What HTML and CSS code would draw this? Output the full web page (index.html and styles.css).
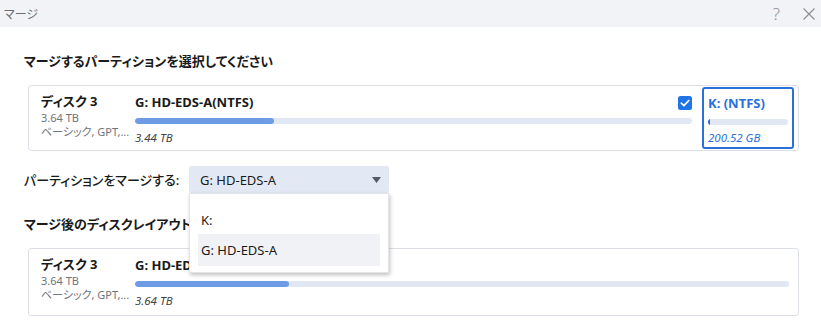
FILE: index.html
```html
<!DOCTYPE html>
<html lang="ja">
<head>
<meta charset="utf-8">
<link rel="stylesheet" href="styles.css">
</head>
<body>
<div class="titlebar">
  <span class="title">マージ</span>
  <div class="tb-icons">
    <span class="help">?</span>
    <svg class="close" width="14" height="14" viewBox="0 0 14 14"><path d="M1.5 1.5L12.5 12.5M12.5 1.5L1.5 12.5" stroke="#8a8d96" stroke-width="1.1" fill="none"/></svg>
  </div>
</div>
<div class="content">
  <h2 class="heading">マージするパーティションを選択してください</h2>
  <div class="card">
    <div class="disk">
      <div class="disk-name">ディスク 3</div>
      <div class="disk-size">3.64 TB</div>
      <div class="disk-type">ベーシック, GPT,...</div>
    </div>
    <div class="part">
      <div class="part-head">
        <span class="part-name">G: HD-EDS-A(NTFS)</span>
        <svg class="check" width="14" height="14" viewBox="0 0 14 14"><rect width="14" height="14" rx="2.5" fill="#1f74e8"/><path d="M3.3 7.2L5.9 9.7L10.8 4.5" stroke="#fff" stroke-width="1.7" fill="none" stroke-linecap="round" stroke-linejoin="round"/></svg>
      </div>
      <div class="bar"><div class="fill" style="width:25%"></div></div>
      <div class="part-size">3.44 TB</div>
    </div>
    <div class="part part-sel">
      <div class="part-head"><span class="part-name">K: (NTFS)</span></div>
      <div class="bar"><div class="fill tick"></div></div>
      <div class="part-size">200.52 GB</div>
    </div>
  </div>
  <div class="merge-row">
    <span class="merge-label">パーティションをマージする:</span>
    <div class="select-wrap">
      <div class="select">
        <span>G: HD-EDS-A</span>
        <svg width="9" height="6" viewBox="0 0 9 6"><path d="M0 0H9L4.5 6Z" fill="#555a63"/></svg>
      </div>
      <div class="menu">
        <div class="opt">K:</div>
        <div class="opt opt-hover">G: HD-EDS-A</div>
      </div>
    </div>
  </div>
  <h2 class="heading heading2">マージ後のディスクレイアウト</h2>
  <div class="card card2">
    <div class="disk">
      <div class="disk-name">ディスク 3</div>
      <div class="disk-size">3.64 TB</div>
      <div class="disk-type">ベーシック, GPT,...</div>
    </div>
    <div class="part">
      <div class="part-head"><span class="part-name">G: HD-EDS-A(NTFS)</span></div>
      <div class="bar"><div class="fill" style="width:23.6%"></div></div>
      <div class="part-size">3.64 TB</div>
    </div>
  </div>
</div>
</body>
</html>
```
FILE: styles.css
```css
* { box-sizing: border-box; }
html, body { margin: 0; padding: 0; }
body {
  width: 821px;
  height: 335px;
  overflow: hidden;
  background: #fff;
  font-family: "Noto Sans", "Noto Sans CJK JP", sans-serif;
  font-feature-settings: "palt";
  color: #1a1a1a;
}
.titlebar {
  height: 27px;
  background: #f2f3f7;
  display: flex;
  align-items: center;
  justify-content: space-between;
  padding: 0 5px 0 4px;
}
.title { font-size: 12px; color: #6b6e75; }
.tb-icons { display: flex; align-items: center; gap: 22px; }
.help { font-size: 17px; color: #8a8d96; font-weight: 300; line-height: 1; }
.content { padding: 0 22px 0 24px; }
.heading {
  margin: 24px 0 0;
  font-size: 13px;
  line-height: 20px;
  font-weight: 700;
}
.heading2 { margin-top: 21px; }
.card {
  margin: 14px 0 0 4px;
  height: 66px;
  border: 1px solid #dcdfe5;
  border-radius: 3px;
  display: flex;
  align-items: stretch;
  padding: 0 4px 0 12px;
}
.card2 { height: 68px; padding-right: 9px; }
.disk { width: 94px; padding-top: 5px; flex: none; }
.disk-name { font-size: 13px; font-weight: 700; line-height: 20px; }
.disk-size, .disk-type { font-size: 11px; color: #6f737b; line-height: 14px; white-space: nowrap; }
.part { flex: 1; padding-top: 5px; display: flex; flex-direction: column; }
.part-head { display: flex; justify-content: space-between; align-items: center; height: 21px; }
.part-name { font-size: 13px; font-weight: 700; line-height: 20px; }
.check { margin-top: 2px; }
.bar {
  margin-top: 6px;
  height: 6px;
  border-radius: 3px;
  background: #e1e7f3;
  overflow: hidden;
}
.fill { height: 100%; background: #6d9be6; border-radius: 3px; }
.tick { width: 2px; background: #2c6bd6; border-radius: 0; }
.part-size { margin-top: 7px; font-size: 11.5px; font-style: italic; color: #444; line-height: 14px; }
.part-sel {
  flex: none;
  width: 92px;
  margin: 1px 0 1px 10px;
  border: 2px solid #2b6fd9;
  border-radius: 3px;
  padding: 3px 4px 0 4px;
}
.part-sel .part-name { color: #2b6fd9; }
.part-sel .part-size { color: #2b6fd9; margin-top: 6px; }
.merge-row {
  margin-top: 15px;
  display: flex;
  align-items: center;
  height: 27px;
}
.merge-label { width: 165px; flex: none; white-space: nowrap; font-size: 13px; font-weight: 500; }
.select-wrap { position: relative; width: 200px; }
.select {
  height: 27px;
  background: #e3e9f4;
  border-radius: 2px;
  display: flex;
  align-items: center;
  justify-content: space-between;
  padding: 0 8px 0 11px;
  font-size: 13px;
}
.menu {
  position: absolute;
  top: 27px;
  left: 0;
  width: 200px;
  height: 80px;
  background: #fff;
  border: 1px solid #e2e4e8;
  box-shadow: 1px 2px 4px rgba(0,0,0,0.25);
  padding: 12px 8px 0 8px;
  z-index: 5;
}
.opt { height: 27px; display: flex; align-items: center; padding-left: 3px; font-size: 13px; }
.opt-hover { margin-top: 1px; height: 32px; background: #f0f2f6; }
```
